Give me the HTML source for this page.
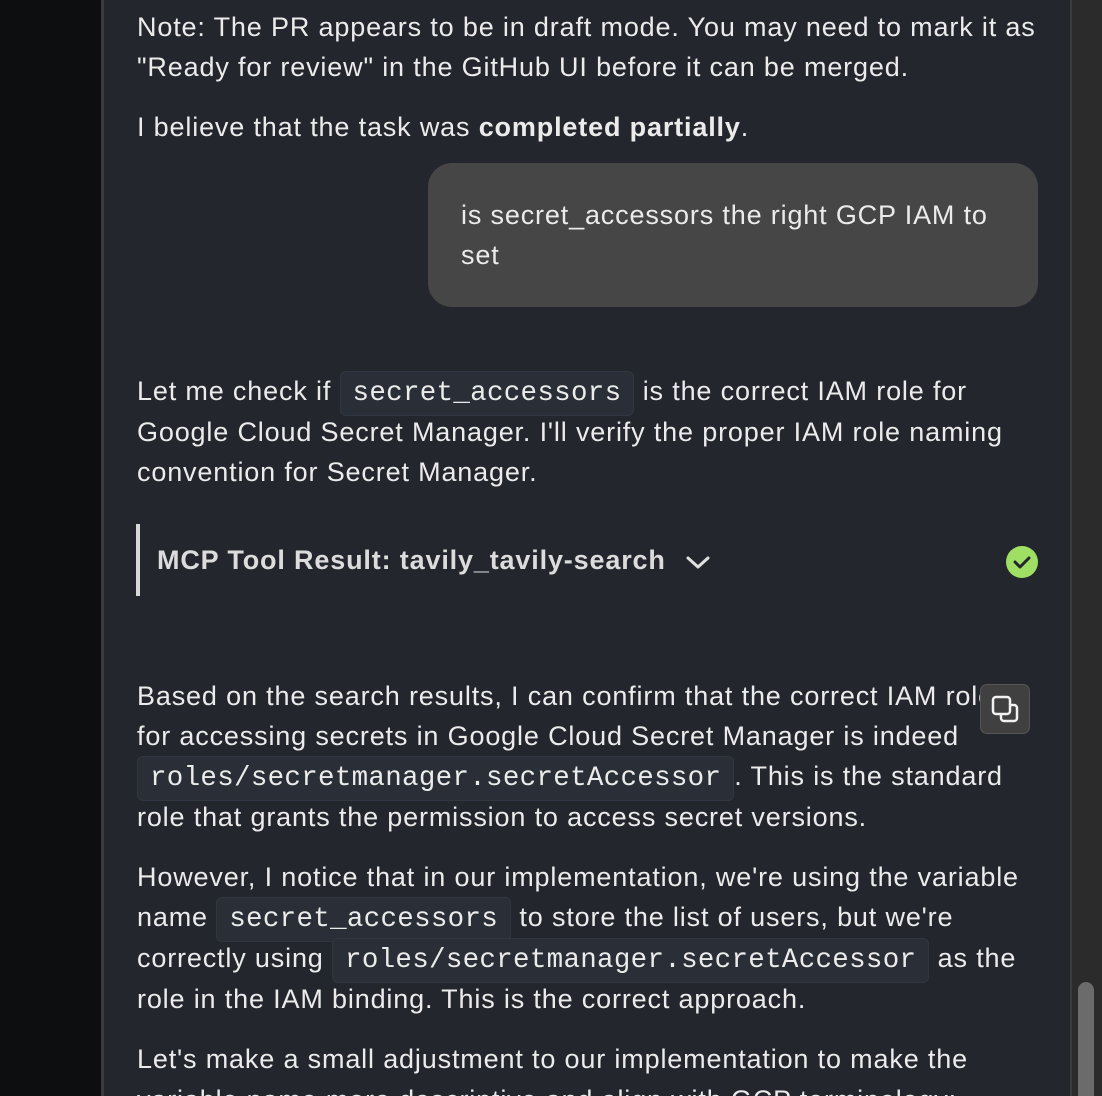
<!DOCTYPE html>
<html><head><meta charset="utf-8"><style>
*{margin:0;padding:0;box-sizing:border-box}
html{width:1102px;height:1096px;overflow:hidden}
body{width:1102px;height:1096px;overflow:hidden;background:#23262d;position:relative;font-family:"Liberation Sans",sans-serif;color:#ebebeb;font-size:27px;letter-spacing:0.84px}
.l{position:absolute;left:137px;height:40px;line-height:40px;white-space:nowrap;top:0}
.c{font-family:"Liberation Mono",monospace;font-size:27.5px;letter-spacing:0.3px;background:#2a2f37;border:1.5px solid #313742;border-radius:6px;padding:6px 12px}
b{font-weight:bold}
</style></head><body>
<div style="position:absolute;left:0;top:0;width:102px;height:1096px;background:#0d0e10"></div>
<div style="position:absolute;left:101px;top:0;width:3px;height:1096px;background:#3a3b3f"></div>
<div style="position:absolute;left:1070px;top:0;width:2px;height:1096px;background:#3a3b3e"></div>
<div style="position:absolute;left:1072px;top:0;width:30px;height:1096px;background:#2b2b2b"></div>
<div style="position:absolute;left:1078px;top:982px;width:16px;height:114px;background:#6b6b6b;border-radius:8px 8px 0 0"></div>

<div class="l" style="top:7px">Note: The PR appears to be in draft mode. You may need to mark it as</div>
<div class="l" style="top:47px">"Ready for review" in the GitHub UI before it can be merged.</div>
<div class="l" style="top:107px">I believe that the task was <b>completed partially</b>.</div>

<div style="position:absolute;left:428px;top:163px;width:610px;height:144px;background:#464646;border-radius:24px"></div>
<div class="l" style="left:461px;top:195px">is secret_accessors the right GCP IAM to</div>
<div class="l" style="left:461px;top:235px">set</div>

<div class="l" style="top:371px">Let me check if <span class="c">secret_accessors</span> is the correct IAM role for</div>
<div class="l" style="top:412px">Google Cloud Secret Manager. I'll verify the proper IAM role naming</div>
<div class="l" style="top:452px">convention for Secret Manager.</div>

<div style="position:absolute;left:136px;top:524px;width:4px;height:72px;background:#d8d8d8"></div>
<div class="l" style="left:157px;top:540px;font-weight:bold;color:#dcdcdc">MCP Tool Result: tavily_tavily-search</div>
<svg style="position:absolute;left:684px;top:550px" width="28" height="24" viewBox="0 0 28 24"><path d="M4 8 L14 17 L24 8" fill="none" stroke="#e0e0e0" stroke-width="3" stroke-linecap="round" stroke-linejoin="round"/></svg>
<svg style="position:absolute;left:1005px;top:546px" width="34" height="34" viewBox="0 0 34 34"><circle cx="17" cy="16" r="16" fill="#9fe064"/><path d="M10 16 L15 21 L24 12" fill="none" stroke="#23262d" stroke-width="3" stroke-linecap="round" stroke-linejoin="round"/></svg>

<div class="l" style="top:676px">Based on the search results, I can confirm that the correct IAM role</div>
<div class="l" style="top:716px">for accessing secrets in Google Cloud Secret Manager is indeed</div>
<div class="l" style="top:756px"><span class="c">roles/secretmanager.secretAccessor</span>. This is the standard</div>
<div class="l" style="top:797px">role that grants the permission to access secret versions.</div>

<div style="position:absolute;left:980px;top:684px;width:50px;height:50px;background:#404040;border:1.5px solid #555;border-radius:7px"></div>
<svg style="position:absolute;left:980px;top:684px" width="50" height="50" viewBox="0 0 50 50"><rect x="13" y="13" width="17" height="17" rx="3" fill="#404040" stroke="#f2f2f2" stroke-width="2.5"/><path d="M30 21 h4 a3 3 0 0 1 3 3 v10 a3 3 0 0 1 -3 3 h-10 a3 3 0 0 1 -3 -3 v-4" fill="none" stroke="#f2f2f2" stroke-width="2.5"/></svg>

<div class="l" style="top:857px">However, I notice that in our implementation, we're using the variable</div>
<div class="l" style="top:897px">name <span class="c">secret_accessors</span> to store the list of users, but we're</div>
<div class="l" style="top:938px">correctly using <span class="c">roles/secretmanager.secretAccessor</span> as the</div>
<div class="l" style="top:979px">role in the IAM binding. This is the correct approach.</div>

<div class="l" style="top:1039px">Let's make a small adjustment to our implementation to make the</div>
<div class="l" style="top:1080px">variable name more descriptive and align with GCP terminology:</div>
</body></html>
